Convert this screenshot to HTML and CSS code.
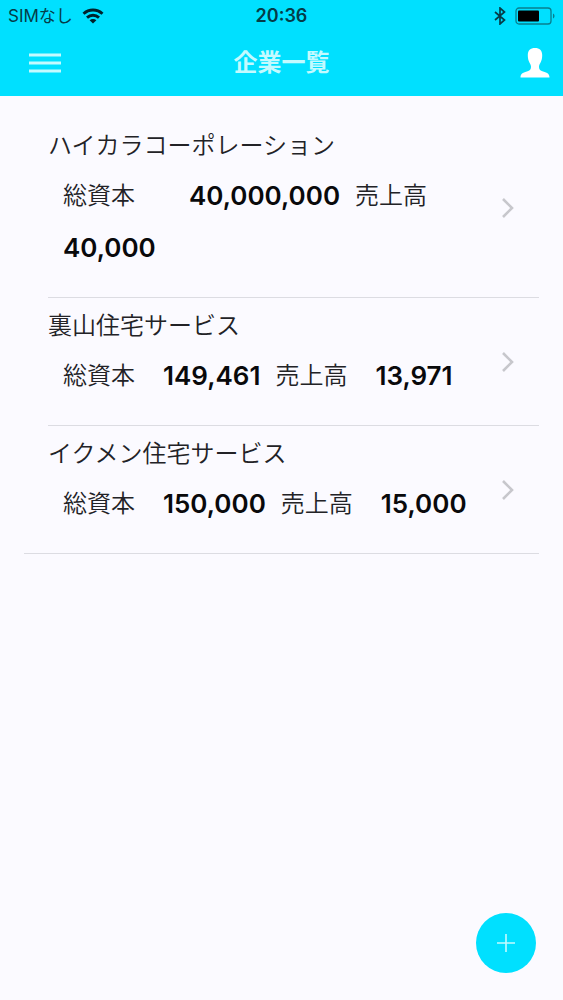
FILE: index.html
```html
<!DOCTYPE html>
<html lang="ja">
<head>
<meta charset="utf-8">
<meta name="viewport" content="width=device-width, initial-scale=1">
<title>企業一覧</title>
<link rel="stylesheet" href="styles.css">
</head>
<body>
<header class="header">
  <div class="status">
    <div class="status-left">
      <span>SIMなし</span>
      <svg class="wifi" viewBox="0 0 22 16" aria-hidden="true"><path d="M1.500 5.800C7 .7 15 .7 20.500 5.800M5 9.600c3.500-3.200 8.500-3.200 12 0" fill="none" stroke="currentColor" stroke-width="2.900"/><path d="M11 15.500 7.600 12.300c1.900-1.700 4.900-1.700 6.800 0z" fill="currentColor"/></svg>
    </div>
    <time class="clock">20:36</time>
    <div class="status-right">
      <svg class="bluetooth" viewBox="0 0 12 18" aria-hidden="true"><path d="M1 5l9.500 8L6 17V1l4.500 4L1 13" fill="none" stroke="currentColor" stroke-width="1.700"/></svg>
      <svg class="battery" viewBox="0 0 40 18" aria-hidden="true"><rect x="1" y="1" width="35" height="16" rx="3" fill="none" stroke="#087f8f" stroke-width="1.300"/><rect x="3" y="3.500" width="21" height="11" rx="1" fill="#000"/><path d="M38 6.500c2 .8 2 4.200 0 5z" fill="#087f8f"/></svg>
    </div>
  </div>
  <nav class="nav">
    <button class="icon-button menu" type="button" aria-label="メニュー">
      <svg class="menu-icon" viewBox="0 0 32 20" aria-hidden="true"><path d="M0 2h32M0 10h32M0 18h32" stroke="#c4faff" stroke-width="2.800"/></svg>
    </button>
    <h1 class="title">企業一覧</h1>
    <button class="icon-button profile" type="button" aria-label="プロフィール">
      <svg class="user-icon" viewBox="0 0 30 30" aria-hidden="true"><path d="M15 0c4.600 0 7.200 2.600 7.200 7 0 3.300-.6 5.300-1.500 7.300-.6 1.500-1.700 2.600-1.700 4.400 0 2.400.7 3.500 3.400 4.500 4.300 1.500 7.100 2 7.100 6.300H.500c0-4.300 2.800-4.800 7.100-6.300 2.700-1 3.400-2.100 3.400-4.500 0-1.800-1.100-2.900-1.700-4.400C8.400 12.300 7.800 10.300 7.800 7c0-4.400 2.600-7 7.200-7z" fill="#fff"/></svg>
    </button>
  </nav>
</header>
<main class="main">
  <ul class="list">
    <li class="item">
      <a class="link" href="#">
        <div class="body">
          <h2 class="name">ハイカラコーポレーション</h2>
          <dl class="figures">
            <dt class="wide">総資本</dt><dd>40,000,000</dd>
            <dt>売上高</dt><dd>40,000</dd>
          </dl>
        </div>
        <svg class="chevron" viewBox="0 0 14 22" aria-hidden="true"><path d="M2 2l9 9-9 9"/></svg>
      </a>
    </li>
    <li class="item">
      <a class="link" href="#">
        <div class="body">
          <h2 class="name">裏山住宅サービス</h2>
          <dl class="figures">
            <dt>総資本</dt><dd>149,461</dd>
            <dt>売上高</dt><dd>13,971</dd>
          </dl>
        </div>
        <svg class="chevron" viewBox="0 0 14 22" aria-hidden="true"><path d="M2 2l9 9-9 9"/></svg>
      </a>
    </li>
    <li class="item">
      <a class="link" href="#">
        <div class="body">
          <h2 class="name">イクメン住宅サービス</h2>
          <dl class="figures">
            <dt>総資本</dt><dd>150,000</dd>
            <dt>売上高</dt><dd>15,000</dd>
          </dl>
        </div>
        <svg class="chevron" viewBox="0 0 14 22" aria-hidden="true"><path d="M2 2l9 9-9 9"/></svg>
      </a>
    </li>
  </ul>
</main>
<button class="add" type="button" aria-label="追加">
  <svg class="plus" viewBox="0 0 18 18" aria-hidden="true"><path d="M9 0v18M0 9h18" stroke="#c4faff" stroke-width="1.600"/></svg>
</button>
</body>
</html>
```

FILE: styles.css
```css
* {
  box-sizing: border-box;
  margin: 0;
  padding: 0;
}

body {
  min-height: 100vh;
  background: #fbfaff;
  color: #222226;
  font-family: Inter, "Noto Sans CJK JP", sans-serif;
}

svg {
  display: block;
}

button {
  border: 0;
  background: none;
  cursor: pointer;
}

.header {
  background: #00e0ff;
}

.status {
  display: grid;
  grid-template-columns: 1fr auto 1fr;
  align-items: center;
  height: 32px;
  padding: 0 8px;
  color: #053c48;
  font-size: 17px;
  line-height: 32px;
}

.status-left,
.status-right {
  display: flex;
  align-items: center;
  gap: 9px;
}

.status-right {
  justify-content: flex-end;
}

.clock {
  font-size: 18px;
  font-weight: 600;
}

.wifi {
  width: 22px;
  height: 16px;
  color: #00222b;
}

.bluetooth {
  width: 12px;
  height: 18px;
}

.battery {
  width: 40px;
  height: 18px;
}

.nav {
  display: grid;
  grid-template-columns: 1fr auto 1fr;
  align-items: center;
  height: 64px;
  padding: 0 13px 2px;
}

.menu {
  justify-self: start;
  padding-left: 16px;
}

.profile {
  justify-self: end;
}

.menu-icon {
  width: 32px;
  height: 20px;
}

.user-icon {
  width: 30px;
  height: 30px;
}

.title {
  color: #c4faff;
  font-size: 24px;
  font-weight: 700;
  line-height: 36px;
}

.main {
  padding: 22px 24px 96px;
}

.list {
  border-bottom: 1px solid #dcdce2;
  list-style: none;
}

.item {
  padding-left: 24px;
}

.link {
  display: flex;
  align-items: center;
  gap: 24px;
  padding-right: 24px;
  color: inherit;
  text-decoration: none;
}

.item + .item .link {
  border-top: 1px solid #dcdce2;
}

.body {
  flex: 1;
  padding: 10px 0 23px;
}

.name {
  margin-bottom: 6px;
  font-size: 24px;
  font-weight: 350;
  line-height: 36px;
}

.figures {
  display: flex;
  flex-wrap: wrap;
  column-gap: 15px;
  padding-left: 15px;
  font-size: 24px;
  font-weight: 350;
  line-height: 52px;
}

.figures dt {
  padding-right: 13px;
}

.figures .wide {
  padding-right: 39px;
}

.figures dd {
  color: #09090b;
  font-size: 26px;
  font-weight: 600;
}

.chevron {
  width: 14px;
  height: 22px;
  fill: none;
  stroke: #c7c7cc;
  stroke-width: 2.6;
}

.add {
  position: fixed;
  right: 27px;
  bottom: 27px;
  display: grid;
  place-items: center;
  width: 60px;
  height: 60px;
  border-radius: 50%;
  background: #00e0ff;
}

.plus {
  width: 18px;
  height: 18px;
}
```
